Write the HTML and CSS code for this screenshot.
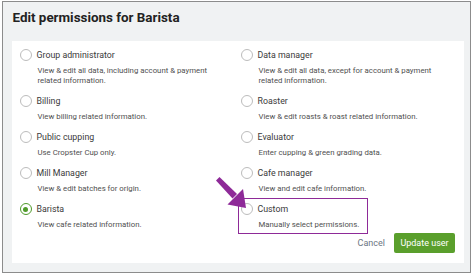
FILE: index.html
```html
<!DOCTYPE html>
<html>
<head>
<meta charset="utf-8">
<link rel="stylesheet" href="styles.css">
</head>
<body>
<div class="frame">
  <h1 class="title">Edit permissions for Barista</h1>
  <div class="card">
    <div class="grid">
      <div class="item"><span class="radio"></span><div class="text"><div class="label">Group administrator</div><div class="desc">View &amp; edit all data, including account &amp; payment related information.</div></div></div>
      <div class="item"><span class="radio"></span><div class="text"><div class="label">Data manager</div><div class="desc">View &amp; edit all data, except for account &amp; payment related information.</div></div></div>
      <div class="item"><span class="radio"></span><div class="text"><div class="label">Billing</div><div class="desc">View billing related information.</div></div></div>
      <div class="item"><span class="radio"></span><div class="text"><div class="label">Roaster</div><div class="desc">View &amp; edit roasts &amp; roast related information.</div></div></div>
      <div class="item"><span class="radio"></span><div class="text"><div class="label">Public cupping</div><div class="desc">Use Cropster Cup only.</div></div></div>
      <div class="item"><span class="radio"></span><div class="text"><div class="label">Evaluator</div><div class="desc">Enter cupping &amp; green grading data.</div></div></div>
      <div class="item"><span class="radio"></span><div class="text"><div class="label">Mill Manager</div><div class="desc">View &amp; edit batches for origin.</div></div></div>
      <div class="item"><span class="radio"></span><div class="text"><div class="label">Cafe manager</div><div class="desc">View and edit cafe information.</div></div></div>
      <div class="item"><span class="radio checked"></span><div class="text"><div class="label">Barista</div><div class="desc">View cafe related information.</div></div></div>
      <div class="item highlighted"><span class="radio"></span><div class="text"><div class="label">Custom</div><div class="desc">Manually select permissions.</div></div><span class="hl-box"></span></div>
    </div>
    <div class="actions">
      <button class="btn-cancel">Cancel</button>
      <button class="btn-primary">Update user</button>
    </div>
  </div>
</div>
<svg class="arrow" width="474" height="275" viewBox="0 0 474 275">
  <polygon points="216,180.5 219.5,177 237,194 232.5,198.5" fill="#8e2a98"/>
  <polygon points="227.5,204.5 243,189 246,208" fill="#8e2a98"/>
</svg>
</body>
</html>
```
FILE: styles.css
```css
html, body {
  margin: 0;
  padding: 0;
  background: #ffffff;
  font-family: Roboto, "Liberation Sans", sans-serif;
}
.frame {
  box-sizing: border-box;
  width: 469px;
  height: 272px;
  margin: 1px 0 0 2px;
  border: 1.5px solid #8c8c8c;
  background: #f0f2f3;
  padding: 6px 6px 9px 8.5px;
  display: flex;
  flex-direction: column;
}
.title {
  margin: 0 0 0 1px;
  font-size: 13.4px;
  line-height: 20px;
  font-weight: 700;
  color: #222;
  height: 33px;
}
.card {
  background: #fff;
  flex: 1;
  padding: 8px 9px 0 8px;
  display: flex;
  flex-direction: column;
}
.grid {
  display: grid;
  grid-template-columns: 221px 1fr;
  row-gap: 9px;
}
.item {
  display: flex;
  align-items: flex-start;
  gap: 5px;
  position: relative;
}
.radio {
  box-sizing: border-box;
  width: 12px;
  height: 12px;
  border: 1px solid #bcbcbc;
  border-radius: 50%;
  background: #fff;
  flex: none;
  display: flex;
  align-items: center;
  justify-content: center;
}
.radio.checked {
  border: 1.5px solid #4f9a2a;
}
.radio.checked::after {
  content: "";
  width: 5px;
  height: 5px;
  border-radius: 50%;
  background: #4f9a2a;
}
.label {
  font-size: 8.8px;
  line-height: 12px;
  color: #3a3a3a;
  margin-bottom: 5px;
}
.desc {
  font-size: 7.8px;
  line-height: 10px;
  color: #505050;
  padding-left: 1px;
  max-width: 185px;
}
.hl-box {
  position: absolute;
  left: -3px;
  top: -5px;
  width: 130px;
  height: 36px;
  box-sizing: border-box;
  border: 1.5px solid #8e2a98;
  pointer-events: none;
}
.actions {
  margin-top: 3px;
  display: flex;
  justify-content: flex-end;
  align-items: center;
  gap: 9px;
}
.btn-cancel {
  background: none;
  border: none;
  padding: 0;
  font-family: Roboto, "Liberation Sans", sans-serif;
  font-size: 9px;
  color: #6b7682;
}
.btn-primary {
  width: 61px;
  height: 20px;
  background: #5a9f2c;
  border: none;
  border-radius: 2px;
  color: #fff;
  font-family: Roboto, "Liberation Sans", sans-serif;
  font-size: 9px;
  padding: 0;
}
.arrow {
  position: absolute;
  left: 0;
  top: 0;
  pointer-events: none;
}
```
